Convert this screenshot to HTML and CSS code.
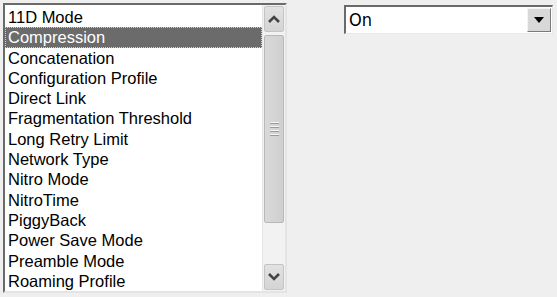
FILE: index.html
```html
<!DOCTYPE html>
<html>
<head>
<meta charset="utf-8">
<link rel="stylesheet" href="styles.css">
</head>
<body>
<div class="page">
  <div class="listbox">
    <ul class="items">
      <li>11D Mode</li>
      <li class="selected">Compression</li>
      <li>Concatenation</li>
      <li>Configuration Profile</li>
      <li>Direct Link</li>
      <li>Fragmentation Threshold</li>
      <li>Long Retry Limit</li>
      <li>Network Type</li>
      <li>Nitro Mode</li>
      <li>NitroTime</li>
      <li>PiggyBack</li>
      <li>Power Save Mode</li>
      <li>Preamble Mode</li>
      <li>Roaming Profile</li>
    </ul>
    <div class="scrollbar">
      <div class="sb-btn">
        <svg width="12" height="8" viewBox="0 0 12 8"><path d="M1 7 L6 2 L11 7" fill="none" stroke="#444" stroke-width="2.6"/></svg>
      </div>
      <div class="track">
        <div class="thumb">
          <div class="grip"><span></span><span></span><span></span><span></span></div>
        </div>
      </div>
      <div class="sb-btn">
        <svg width="12" height="8" viewBox="0 0 12 8"><path d="M1 1 L6 6 L11 1" fill="none" stroke="#444" stroke-width="2.6"/></svg>
      </div>
    </div>
  </div>
  <div class="combo">
    <div class="combo-text">On</div>
    <div class="combo-btn">
      <svg width="10" height="6" viewBox="0 0 10 6"><path d="M0 0 H10 L5 6 Z" fill="#000"/></svg>
    </div>
  </div>
</div>
</body>
</html>
```
FILE: styles.css
```css
html, body {
  margin: 0;
  padding: 0;
  background: #efefef;
}
.page {
  display: flex;
  align-items: flex-start;
  padding: 3px 0 0 3px;
  gap: 57px;
}
.listbox {
  display: flex;
  width: 280px;
  height: 286px;
  background: #fff;
  border-top: 2px solid #6a6a6a;
  border-left: 2px solid #6a6a6a;
  border-right: 2px solid #e4e4e4;
  border-bottom: 2px solid #e4e4e4;
}
.items {
  list-style: none;
  margin: 0;
  padding: 2px 0 0 0;
  flex: 1;
  font-family: "Liberation Sans", Arial, sans-serif;
  font-size: 16.5px;
  color: #000;
  overflow: hidden;
}
.items li {
  height: 20.3px;
  line-height: 20.3px;
  padding-left: 3px;
  white-space: nowrap;
}
.items li.selected {
  background: #6b6b6b;
  color: #fff;
  outline: 1px dotted #d0d0d0;
  outline-offset: -1px;
}
.scrollbar {
  width: 22px;
  display: flex;
  flex-direction: column;
  background: #f2f2f2;
  border-left: 1px solid #e6e6e6;
}
.sb-btn {
  height: 24px;
  margin: 1px 1px;
  background: linear-gradient(#e2e2e2, #d4d4d4);
  border: 1px solid #c4c4c4;
  border-radius: 2px;
  display: flex;
  align-items: center;
  justify-content: center;
}
.track {
  flex: 1;
  padding: 2px 1px;
  display: flex;
  flex-direction: column;
}
.thumb {
  height: 188px;
  box-sizing: border-box;
  background: linear-gradient(90deg, #d9d9d9, #cfcfcf);
  border: 1px solid #b8b8b8;
  border-radius: 2px;
  display: flex;
  align-items: center;
  justify-content: center;
}
.grip {
  display: flex;
  flex-direction: column;
  gap: 2px;
}
.grip span {
  display: block;
  width: 9px;
  height: 1px;
  background: #f5f5f5;
  border-bottom: 1px solid #9a9a9a;
}
.combo {
  display: flex;
  width: 206px;
  height: 26px;
  margin-top: 2px;
  background: #fff;
  border-top: 2px solid #6a6a6a;
  border-left: 2px solid #6a6a6a;
  border-right: 1px solid #e8e8e8;
  border-bottom: 1px solid #e8e8e8;
}
.combo-text {
  flex: 1;
  font-family: "DejaVu Sans Condensed", "DejaVu Sans", sans-serif;
  font-size: 18px;
  line-height: 26px;
  padding-left: 3px;
  color: #000;
}
.combo-btn {
  width: 22px;
  height: 22px;
  margin: 1px 1px;
  background: #d8d8d8;
  border-right: 1px solid #7a7a7a;
  border-bottom: 1px solid #7a7a7a;
  border-top: 1px solid #f4f4f4;
  border-left: 1px solid #f4f4f4;
  display: flex;
  align-items: center;
  justify-content: center;
}
```
